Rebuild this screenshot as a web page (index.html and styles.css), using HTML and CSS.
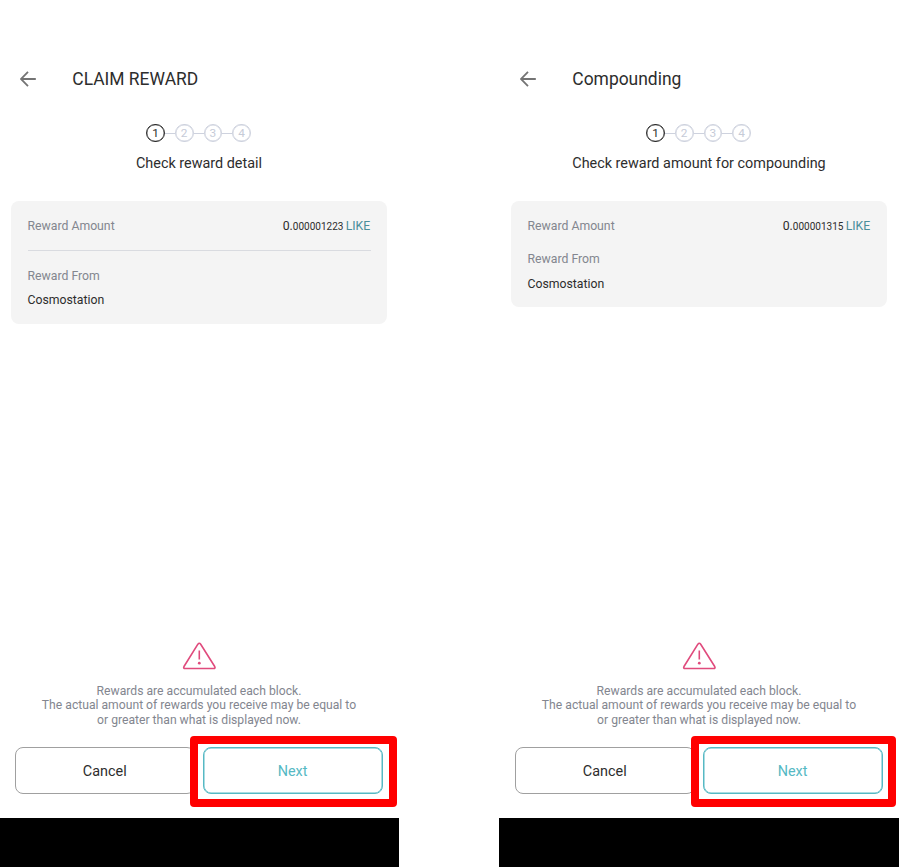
FILE: index.html
```html
<!DOCTYPE html>
<html lang="en">
<head>
<meta charset="utf-8">
<title>Claim reward and compounding</title>
<link rel="stylesheet" href="styles.css">
</head>
<body>
<main class="screens">
  <section class="phone">
    <header class="toolbar">
      <svg class="back" viewBox="0 0 16 16"><path d="M15.8 8H1M8 .8.9 8 8 15.2"/></svg>
      <h1 class="title">CLAIM REWARD</h1>
    </header>
    <div class="steps">
      <span class="step step-active">1</span><i class="link"></i><span class="step">2</span><i class="link"></i><span class="step">3</span><i class="link"></i><span class="step">4</span>
    </div>
    <h2 class="subtitle">Check reward detail</h2>
    <div class="card">
      <div class="row"><span class="label">Reward Amount</span><span class="amount">0.<small class="decimals">000001223</small><b class="denom">LIKE</b></span></div>
      <hr class="divider">
      <div class="label">Reward From</div>
      <div class="validator">Cosmostation</div>
    </div>
    <div class="notice">
      <svg class="warning" viewBox="0 0 34 28"><path d="M15.9 2.200 2 24.500Q1 26.500 3.200 26.500H31.500Q33.700 26.500 32.700 24.500L18.700 2.200Q17.300 .4 15.900 2.200Z"/><path d="M17.300 8.500V17.500"/><circle cx="17.300" cy="21.200" r="1.400"/></svg>
      <p class="message"><span>Rewards are accumulated each block.</span><br><span>The actual amount of rewards you receive may be equal to</span><br><span>or greater than what is displayed now.</span></p>
    </div>
    <div class="actions">
      <button class="button">Cancel</button>
      <div class="next"><button class="button button-next">Next</button><span class="highlight"></span></div>
    </div>
    <footer class="navbar"></footer>
  </section>
  <section class="phone">
    <header class="toolbar">
      <svg class="back" viewBox="0 0 16 16"><path d="M15.8 8H1M8 .8.9 8 8 15.2"/></svg>
      <h1 class="title">Compounding</h1>
    </header>
    <div class="steps">
      <span class="step step-active">1</span><i class="link"></i><span class="step">2</span><i class="link"></i><span class="step">3</span><i class="link"></i><span class="step">4</span>
    </div>
    <h2 class="subtitle">Check reward amount for compounding</h2>
    <div class="card card-compact">
      <div class="row"><span class="label">Reward Amount</span><span class="amount">0.<small class="decimals">000001315</small><b class="denom">LIKE</b></span></div>
      <div class="label">Reward From</div>
      <div class="validator">Cosmostation</div>
    </div>
    <div class="notice">
      <svg class="warning" viewBox="0 0 34 28"><path d="M15.9 2.200 2 24.500Q1 26.500 3.200 26.500H31.500Q33.700 26.500 32.700 24.500L18.700 2.200Q17.300 .4 15.900 2.200Z"/><path d="M17.300 8.500V17.500"/><circle cx="17.300" cy="21.200" r="1.400"/></svg>
      <p class="message"><span>Rewards are accumulated each block.</span><br><span>The actual amount of rewards you receive may be equal to</span><br><span>or greater than what is displayed now.</span></p>
    </div>
    <div class="actions">
      <button class="button">Cancel</button>
      <div class="next"><button class="button button-next">Next</button><span class="highlight highlight-narrow"></span></div>
    </div>
    <footer class="navbar"></footer>
  </section>
</main>
</body>
</html>
```
FILE: styles.css
```css
* { box-sizing: border-box; }
body {
  margin: 0;
  background: #fff;
  color: #2d2d2d;
  font-family: Roboto, sans-serif;
  overflow: hidden;
}
h1, h2, p { margin: 0; font-weight: 400; }
.screens {
  display: flex;
  gap: 100px;
  width: 900px;
  height: 867px;
  margin-left: -1px;
}
.phone {
  flex: 0 0 400px;
  height: 867px;
  display: flex;
  flex-direction: column;
}
.toolbar {
  display: flex;
  align-items: center;
  height: 32px;
  margin-top: 63px;
  padding-left: 20.500px;
}
.back {
  width: 16px;
  height: 16px;
  fill: none;
  stroke: #747474;
  stroke-width: 1.8;
}
.title {
  margin-left: 36.800px;
  font-size: 17.450px;
  line-height: 32px;
}
.steps {
  display: flex;
  align-items: center;
  justify-content: center;
  height: 20px;
  margin-top: 28px;
  padding-right: 1px;
}
.step {
  width: 18.700px;
  height: 18.700px;
  border: 1px solid #ced2de;
  border-radius: 50%;
  box-shadow: inset 0 0 0 .4px #ced2de;
  color: #c6cbd8;
  font-size: 11.800px;
  line-height: 17.500px;
  text-align: center;
}
.step-active {
  border-color: #2d2d2d;
  box-shadow: inset 0 0 0 .3px #2d2d2d;
  color: #2d2d2d;
}
.link { width: 10px; height: 1px; background: #ced2de; }
.subtitle {
  margin-top: 11px;
  font-size: 14.400px;
  line-height: 20px;
  text-align: center;
}
.card {
  height: 123px;
  margin: 27px 12px 0;
  padding: 16px 16px 16px 16.500px;
  border-radius: 8px;
  background: #f4f4f4;
  font-size: 12.250px;
  line-height: 18px;
}
.row { display: flex; justify-content: space-between; }
.amount { margin-right: .8px; }
.label { color: #83868f; }
.decimals { font-size: 10px; }
.denom { margin-left: 2.200px; color: #4b8e9b; font-weight: 400; }
.divider {
  height: 1px;
  margin: 14px 0 16px;
  border: 0;
  background: #d9dbe0;
}
.validator { margin-top: 6px; }
.card-compact { height: 106px; }
.card-compact .row { margin-bottom: 14px; }
.card-compact .validator { margin-top: 7px; }
.notice { margin-top: auto; text-align: center; }
.warning {
  display: block;
  width: 34px;
  height: 28px;
  margin: 0 auto 14px;
  fill: none;
  stroke: #e04b7d;
  stroke-width: 1.600;
}
.warning circle { fill: #e04b7d; stroke: none; }
.message {
  color: #83868f;
  font-size: 12.170px;
  line-height: 14.500px;
  white-space: nowrap;
}
.actions {
  display: flex;
  gap: 8px;
  margin: 20px 16.500px 24px 16px;
}
.next { position: relative; flex: 0 0 180px; }
.button {
  flex: 1;
  width: 100%;
  height: 47px;
  padding: 2px 0 0;
  border: 1px solid #a0a0a0;
  border-radius: 8px;
  background: #fff;
  color: #2d2d2d;
  font: 14.400px/43px Roboto, sans-serif;
}
.button-next {
  border-color: #56b9c4;
  box-shadow: inset 0 0 0 .5px #56b9c4;
  color: #56b9c4;
}
.highlight {
  position: absolute;
  top: -11px;
  left: -12.500px;
  width: 207px;
  height: 71px;
  border: 8px solid #f00;
  border-radius: 4px;
}
.highlight-narrow { left: -11.500px; width: 205px; }
.navbar { height: 49px; background: #000; }
```
